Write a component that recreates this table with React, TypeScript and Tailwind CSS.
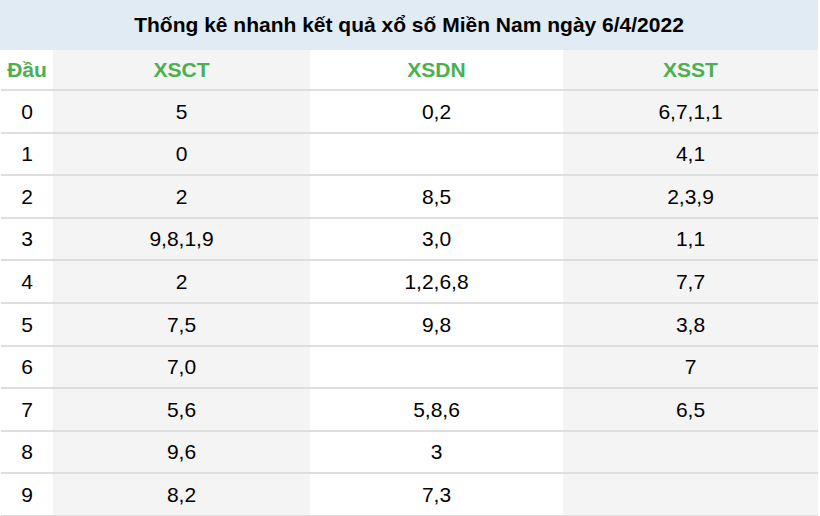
const data: [string, string, string, string][] = [
  ['0', '5', '0,2', '6,7,1,1'],
  ['1', '0', '', '4,1'],
  ['2', '2', '8,5', '2,3,9'],
  ['3', '9,8,1,9', '3,0', '1,1'],
  ['4', '2', '1,2,6,8', '7,7'],
  ['5', '7,5', '9,8', '3,8'],
  ['6', '7,0', '', '7'],
  ['7', '5,6', '5,8,6', '6,5'],
  ['8', '9,6', '3', ''],
  ['9', '8,2', '7,3', ''],
]

const cols = 'grid grid-cols-[52px_257px_253px_255px]'

export default function App(): JSX.Element {
  return (
    <div className="w-[820px] h-[516px] overflow-hidden bg-white font-['Liberation_Sans',Arial,sans-serif] text-black">
      <div className="w-[818px]">
        <div className="h-[50px] bg-[#e1ebf3] flex items-center justify-center pb-px text-[21px] font-bold">
          Thống kê nhanh kết quả xổ số Miền Nam ngày 6/4/2022
        </div>
        <div className={`${cols} ml-px h-[41px] border-b-2 border-[#dedede] text-[21px] font-bold text-[#4caf50]`}>
          <div className="flex items-center justify-center">Đầu</div>
          <div className="flex items-center justify-center bg-[#f4f4f4]">XSCT</div>
          <div className="flex items-center justify-center">XSDN</div>
          <div className="flex items-center justify-center bg-[#f4f4f4]">XSST</div>
        </div>
        {data.map((r) => (
          <div key={r[0]} className={`${cols} ml-px h-[42.6px] border-b-2 border-[#dedede] text-[21px]`}>
            <div className="flex items-center justify-center">{r[0]}</div>
            <div className="flex items-center justify-center bg-[#f4f4f4]">{r[1]}</div>
            <div className="flex items-center justify-center">{r[2]}</div>
            <div className="flex items-center justify-center bg-[#f4f4f4]">{r[3]}</div>
          </div>
        ))}
      </div>
    </div>
  )
}
